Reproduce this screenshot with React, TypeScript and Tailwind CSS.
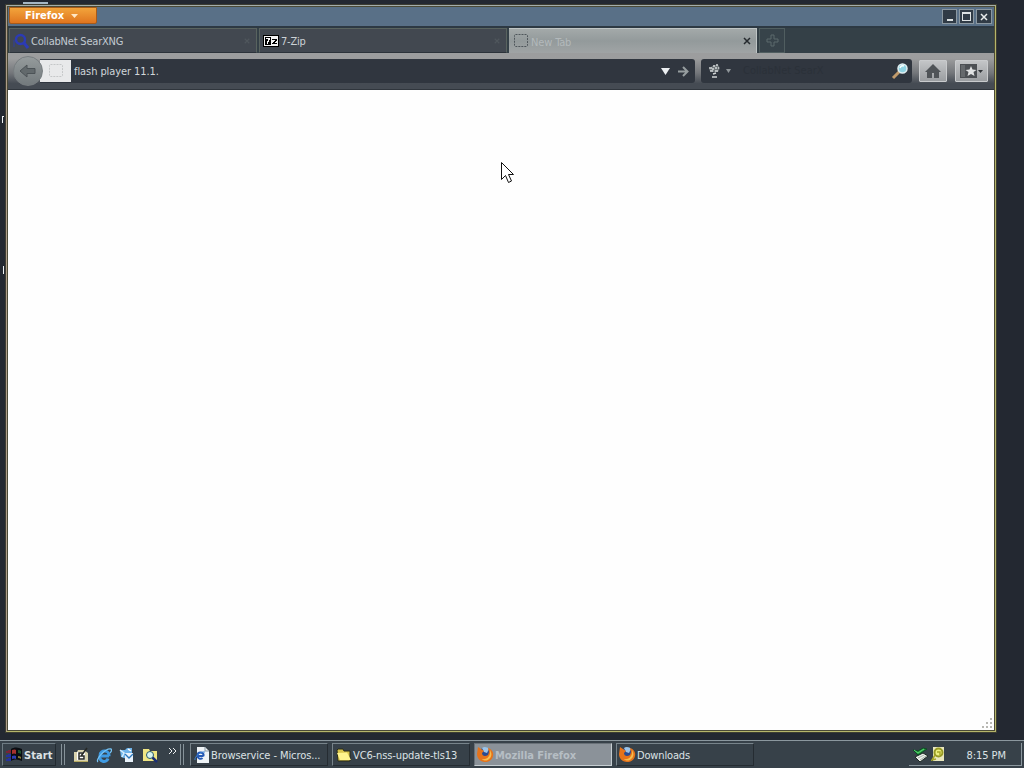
import type { ReactNode } from "react";

type TabProps = {
  title: string;
  icon: ReactNode;
  active?: boolean;
  titleClass?: string;
};

type TaskButtonProps = {
  label: string;
  icon: ReactNode;
  className: string;
  labelClass?: string;
};

function BlankPageIcon({ stroke = "#4f565b" }: { stroke?: string }) {
  return (
    <svg width="16" height="16" viewBox="0 0 16 16" fill="none">
      <rect x="1.5" y="1.5" width="13" height="12" rx="1" stroke={stroke} strokeDasharray="2 1" />
    </svg>
  );
}

function SearxIcon() {
  return (
    <svg width="16" height="16" viewBox="0 0 16 16" fill="none" stroke="#2c3bb4">
      <circle cx="7.500" cy="6.500" r="4.500" strokeWidth="2.500" />
      <path d="m11 10 4 5" strokeWidth="3" />
      <path d="M1 14V7" strokeWidth="1.500" opacity=".5" />
    </svg>
  );
}

function SevenZipIcon() {
  return (
    <svg width="16" height="12" viewBox="0 0 16 12" shapeRendering="crispEdges">
      <path fill="#000" d="M0 0h16v12H0z" />
      <path fill="#f4f4f4" d="M1 1h14v10H1z" />
      <path fill="#000" d="M2 2h6v8H2z" />
      <path d="M3 3h4v2H6v2H5v2H4V6h1V4H3z" fill="#fff" />
      <path d="M9 4h5v2h-1v1h-1v1h2v1H9V8h1V7h1V6h1V5H9z" fill="#000" />
    </svg>
  );
}

function FirefoxIcon() {
  return (
    <svg width="17" height="17" viewBox="0 0 17 17">
      <circle cx="8" cy="8" r="6.500" fill="#294b91" />
      <path d="M5 2c2-2 6-1 7 1l-2 4-3-1z" fill="#9cc4e8" />
      <path
        d="M1 1c1 1 2 1 3 2l3 2-2 2c0 3 3 4 6 2l1-3-1-4c4 1 6 5 5 8-1 4-4 6-8 6-5 0-8-4-8-8z"
        fill="#e5731b"
      />
      <path d="M13 4c2 3 2 7-1 9-2 2-5 2-7 0 5 1 9-3 8-9z" fill="#f6bd4d" />
    </svg>
  );
}

function ExplorerGlyph() {
  return (
    <svg width="16" height="16" viewBox="0 0 16 16" fill="none">
      <path d="M13 9H4a4 4 0 0 0 8 2.500M4 8a4.500 4.500 0 0 1 9 1" stroke="#3f9be3" strokeWidth="3" />
      <path d="M2 15C-1 13 9 1 15 2c1 1 0 3-1 4" stroke="#76c4f5" strokeWidth="1.300" />
    </svg>
  );
}

function WebDocumentIcon() {
  return (
    <svg width="16" height="16" viewBox="0 0 16 16" fill="none">
      <path d="M3 0h8l4 4v12H3z" fill="#eef3f6" />
      <path d="M11 0v4h4" stroke="#8797a4" />
      <path d="M9.500 9H3.500a3 3 0 0 0 5 2M3.500 8a3 3 0 0 1 6 1" stroke="#2459b5" strokeWidth="2" />
      <path d="M1 13C0 10 7 4 11 5" stroke="#3b82d4" />
    </svg>
  );
}

function FolderIcon() {
  return (
    <svg width="16" height="14" viewBox="0 0 16 14">
      <path d="M1 2 2 1h5l1 2h6v10H2z" fill="#d9c54c" stroke="#292b1b" />
      <path d="m1 5 10-.5L15 12H4z" fill="#fff48d" />
    </svg>
  );
}

function DesktopIcon() {
  return (
    <svg width="16" height="16" viewBox="0 0 16 16" fill="none">
      <path d="M1 5h3l1-2h6l4 3v9H1z" fill="#d9d3ae" />
      <path d="M4 5h8v8H4z" fill="#fff" />
      <path d="M11 6H6v6h5V9H8l6-8" stroke="#252724" strokeWidth="1.500" />
      <path d="M1 14.500h14" stroke="#b7ab62" />
    </svg>
  );
}

function MailIcon() {
  return (
    <svg width="16" height="16" viewBox="0 0 16 16" fill="none">
      <path d="M1 3h5l2-2h5v6l-5 5-6-2z" fill="#6fb4ea" />
      <path d="m1 3 4 3-2 4" stroke="#d6edfb" strokeWidth="1.500" />
      <path d="M6 6h8v9H6z" fill="#e9f2fa" />
      <path d="m6 7 4 4 4-4" stroke="#2c77bb" strokeWidth="1.300" />
      <path d="m9 2 3 2" stroke="#fff" strokeWidth="1.500" />
    </svg>
  );
}

function SearchFolderIcon() {
  return (
    <svg width="16" height="16" viewBox="0 0 16 16" fill="none">
      <path d="M1 2h6l1 2h7v10H1z" fill="#efe583" />
      <circle cx="8" cy="8" r="3.500" fill="#d8f3f0" stroke="#25596a" />
      <path d="m10.500 10.500 4.500 4.500" stroke="#1a2f75" strokeWidth="2.500" />
    </svg>
  );
}

function WindowsFlag() {
  return (
    <svg width="17" height="15" viewBox="0 0 17 15">
      <path d="M0 4h2v2H0zM2 3h3v3H2z" fill="#7a2436" />
      <path d="M0 8h2v2H0zM2 7h3v3H2zM0 12h2v2H0zM2 11h3v3H2z" fill="#26329d" />
      <path d="M5 2c3-2 7-2 11 0v12c-4-2-8-2-11 0z" fill="#090d12" />
      <path d="M6 3q3-1 4 0v4q-2-1-4 0z" fill="#a5322e" />
      <path d="M12 3q2 0 3 1v3q-1-1-3-1z" fill="#1d5330" />
      <path d="M6 9q3-1 4 0v3q-2-1-4 0z" fill="#2f3eb4" />
      <path d="M12 9q2 0 3 1v2q-1-1-3-1z" fill="#857a35" />
    </svg>
  );
}

function CloseGlyph({ color }: { color: string }) {
  return (
    <svg width="8" height="8" viewBox="0 0 8 8" stroke={color} strokeWidth="1.500">
      <path d="m1 1 6 6M7 1 1 7" />
    </svg>
  );
}

function Tab({ title, icon, active, titleClass = "text-[#ccd2d6]" }: TabProps) {
  return (
    <div
      className={
        active
          ? "flex h-[25px] w-[248px] items-center border-t border-r border-[#bfc5c5] bg-linear-to-b from-[#a3a9a9] via-[#939a9b] to-[#a0a4a5] pl-1"
          : "flex h-[25px] w-[248px] items-center border border-[#59635f] border-b-[#2c333a] bg-[#424850] pl-[3px]"
      }
    >
      <span className="flex w-[18px] items-center">{icon}</span>
      <span className={`flex-1 pt-[3px] ${titleClass}`}>{title}</span>
      <span className={active ? "mr-[5px] flex" : "mr-[5px] flex scale-75"}>
        <CloseGlyph color={active ? "#252a2e" : "#50575d"} />
      </span>
    </div>
  );
}

function TitleBar() {
  return (
    <div className="flex h-[21px] justify-between border-b-2 border-[#2d3943] bg-[#597087] pl-px">
      <div className="flex h-[17px] w-[88px] items-center rounded-b-[2px] border border-[#a75a19] bg-linear-to-b from-[#f2a43b] to-[#df751e] pl-[15px] text-white">
        <span className="pt-px text-[11px] font-bold">Firefox</span>
        <svg className="ml-[7px]" width="7" height="4" viewBox="0 0 7 4">
          <path d="M0 0h7L3.500 4z" fill="#ffe7c5" />
        </svg>
      </div>
      <div className="mt-[2px] mr-[2px] flex h-[15px] gap-[2px]">
        <span className="flex w-[15px] items-end justify-center border border-[#8b98a1] bg-[#303b46] pb-[2px]">
          <span className="h-[2px] w-[6px] bg-[#dce1e3]" />
        </span>
        <span className="flex w-[15px] items-center justify-center border border-[#8b98a1] bg-[#303b46]">
          <span className="h-[9px] w-[9px] border border-t-2 border-[#dce1e3]" />
        </span>
        <span className="flex w-[16px] items-center justify-center border border-[#8b98a1] bg-[#303b46]">
          <CloseGlyph color="#e8ebec" />
        </span>
      </div>
    </div>
  );
}

function TabStrip() {
  return (
    <div className="flex h-[25px] gap-[2px] bg-[#344047] pl-px">
      <Tab title="CollabNet SearXNG" icon={<SearxIcon />} titleClass="tracking-[-0.2px] text-[#c3cbd2]" />
      <Tab title="7-Zip" icon={<SevenZipIcon />} titleClass="tracking-[-0.2px] text-[#ccd2d6]" />
      <Tab title="New Tab" icon={<BlankPageIcon />} active titleClass="tracking-[-0.15px] text-[#b3b9bb]" />
      <div className="flex w-[26px] items-center justify-center border border-[#505e60] bg-[#37434a]">
        <svg width="13" height="13" viewBox="0 0 13 13" fill="none" stroke="#5d6b6d">
          <path d="M5 1h3v4h4v3H8v4H5V8H1V5h4z" />
        </svg>
      </div>
    </div>
  );
}

function NavBar() {
  return (
    <div className="flex h-[37px] border-b border-[#30363d] bg-linear-to-b from-[#9c9d9e] from-15% via-[#74777b] via-55% to-[#454b53] to-85% pl-[5px]">
      <span className="z-10 mt-[3px] flex h-[30px] w-[30px] items-center justify-center rounded-full border border-[#777d80] bg-linear-to-b from-[#959b9c] to-[#737a7d]">
        <svg width="18" height="14" viewBox="0 0 18 14">
          <path d="m8 1-7 6 7 6V9.500h8v-5H8z" fill="#62696c" stroke="#4c5357" />
        </svg>
      </span>
      <div className="mt-[6px] -ml-[3px] flex h-[24px] w-[655px] items-center rounded-r-[3px] bg-[#30363f]">
        <span className="flex h-[22px] w-[31px] items-center justify-center bg-[#e8e9ea]">
          <BlankPageIcon stroke="#c5c7c8" />
        </span>
        <span className="flex-1 pt-[2px] pl-[3px] tracking-[-0.08px] text-[#d1d7da]">flash player 11.1.</span>
        <svg width="9" height="7" viewBox="0 0 9 7">
          <path d="M0 0h9L4.500 7z" fill="#eceff2" />
        </svg>
        <svg className="mr-[6px] ml-[8px]" width="11" height="11" viewBox="0 0 11 11" fill="none">
          <path d="M0 5.500h9M5 1l4.500 4.500L5 10" stroke="#969d9f" strokeWidth="2" />
        </svg>
      </div>
      <div className="mt-[6px] ml-[6px] flex h-[24px] w-[211px] items-center rounded-[3px] bg-[#30363f] pr-[3px] pl-[7px]">
        <svg width="12" height="14" viewBox="0 0 12 14" fill="none">
          <path d="M3 3 6 1h4l2 3-2 4H5L1 6z" fill="#6d7478" />
          <path
            d="M1 4h3M5 2h2M8 1h2M4 5h2M7 4h2M10 4h1M2 7h3M7 7h3M8 9l-3 1M4 13h5"
            stroke="#d0d4d5"
            strokeWidth="1.400"
          />
        </svg>
        <svg className="ml-[6px]" width="5" height="4" viewBox="0 0 5 4">
          <path d="M0 0h5L2.500 4z" fill="#8e9599" />
        </svg>
        <span className="flex-1 pl-[12px] text-[#2b3139]">CollabNet SearX</span>
        <svg width="18" height="18" viewBox="0 0 18 18" fill="none">
          <path d="m8 10-6 6" stroke="#c09a6b" strokeWidth="3" />
          <circle cx="11.500" cy="6.500" r="4.500" fill="#8fd3e2" stroke="#e2f0f3" strokeWidth="1.500" />
          <path d="M9 6q1-3 4-2" stroke="#f8ffff" strokeWidth="1.500" />
        </svg>
      </div>
      <div className="mt-[7px] ml-[7px] flex h-[22px] w-[28px] items-center justify-center rounded-[1px] border border-[#c9cbcd] bg-linear-to-b from-[#c3c5c7] to-[#9b9ea1]">
        <svg width="16" height="14" viewBox="0 0 16 14">
          <path d="M8 0 0 8h2v6h5V9h2v5h5V8h2z" fill="#505458" />
        </svg>
      </div>
      <div className="mt-[7px] ml-[8px] flex h-[22px] w-[33px] items-center justify-center gap-px rounded-[1px] border border-[#c9cbcd] bg-linear-to-b from-[#c3c5c7] to-[#9b9ea1]">
        <svg width="17" height="14" viewBox="0 0 17 14">
          <path d="M0 0h17v14H0z" fill="#4c5054" />
          <path d="M2 1v12M4 1v12" stroke="#7e8285" />
          <path d="m11 2 1.500 3.500 4 .5-3 2 1 4-3.500-2-3.500 2 1-4-3-2 4-.5z" fill="#e1e3e4" />
        </svg>
        <svg width="5" height="3" viewBox="0 0 5 3">
          <path d="M0 0h5L2.500 3z" fill="#303438" />
        </svg>
      </div>
    </div>
  );
}

function PointerCursor() {
  return (
    <svg className="absolute top-[162px] left-[501px]" width="14" height="22" viewBox="0 0 14 22">
      <path d="M.5.5v17l4-4 3 7 3-1.500-3-6.500h5z" fill="#fff" stroke="#111" />
    </svg>
  );
}

function BrowserWindow() {
  return (
    <main className="mt-[4px] ml-[5px] h-[729px] w-[992px] border border-[#3d3d32]">
      <div className="h-full border border-t-[#a3adab] border-r-[#b5b56a] border-b-[#b5b56a] border-l-[#ae9c89]">
        <div className="flex h-full flex-col border border-[#4b4a36]">
          <TitleBar />
          <TabStrip />
          <NavBar />
          <div className="flex flex-1 items-end justify-end bg-[#fefefe] pr-px pb-px">
            <svg width="12" height="12" viewBox="0 0 12 12" fill="#b8b8b3">
              <path d="M9 1h2v2H9zM5 5h2v2H5zM9 5h2v2H9zM1 9h2v2H1zM5 9h2v2H5zM9 9h2v2H9z" />
            </svg>
          </div>
        </div>
      </div>
    </main>
  );
}

function TaskButton({ label, icon, className, labelClass }: TaskButtonProps) {
  return (
    <div className={`flex h-[23px] items-center ${className}`}>
      <span className="flex w-[17px] shrink-0 justify-center">{icon}</span>
      <span className={`pt-[2px] pl-px whitespace-nowrap ${labelClass ?? "text-[#dce2e5]"}`}>{label}</span>
    </div>
  );
}

function Separator() {
  return <span className="h-[21px] w-[4px] border-x border-[#87939a]" />;
}

function TrayIcons() {
  return (
    <div className="flex gap-[2px]">
      <svg width="17" height="17" viewBox="0 0 17 17" fill="none">
        <path d="m3 11 8-4 5 3-8 6z" fill="#edf1eb" stroke="#1d2823" />
        <path d="m6 12 6-3M8 14l6-4" stroke="#a8b0aa" />
        <path d="m1 4 5 5 9-6-4-1-5 3z" fill="#27983d" stroke="#0d4b25" />
        <path d="m2 4 4 3 6-4" stroke="#59d873" />
      </svg>
      <svg width="15" height="16" viewBox="0 0 15 16" fill="none">
        <path d="M2 1h11v14H2z" fill="#e9e7bd" />
        <circle cx="7.500" cy="6.500" r="4" stroke="#979a25" strokeWidth="2" fill="#eef081" />
        <path d="M4 9 1 14l4-1M6 6h3v3" stroke="#a7a629" strokeWidth="1.500" />
      </svg>
    </div>
  );
}

function Taskbar() {
  return (
    <footer className="mt-[7px] flex h-[28px] items-center border-t border-[#8b979e] bg-[#374149] pl-[2px] text-[#dce2e5]">
      <div className="flex h-[23px] w-[54px] items-center border border-[#6e7b83] border-r-[#232b31] border-b-[#232b31] pl-[3px]">
        <WindowsFlag />
        <span className="pt-[2px] pl-px text-[11px] font-bold tracking-[0.1px]">Start</span>
      </div>
      <span className="ml-[5px] flex">
        <Separator />
      </span>
      <div className="ml-[8px] flex items-center gap-[7px]">
        <DesktopIcon />
        <ExplorerGlyph />
        <MailIcon />
        <SearchFolderIcon />
      </div>
      <svg className="mb-[7px] ml-[10px]" width="9" height="6" viewBox="0 0 9 6" fill="none" stroke="#edf0f1">
        <path d="m1 0 3 3-3 3M5 0l3 3-3 3" />
      </svg>
      <span className="ml-[3px] flex">
        <Separator />
      </span>
      <TaskButton
        label="Browservice - Micros..."
        icon={<WebDocumentIcon />}
        className="ml-[6px] w-[138px] border border-[#78848b] border-r-[#252c32] border-b-[#252c32] pl-[2px]"
        labelClass="tracking-[-0.08px]"
      />
      <TaskButton
        label="VC6-nss-update-tls13"
        icon={<FolderIcon />}
        className="ml-[4px] w-[138px] border border-[#78848b] border-r-[#252c32] border-b-[#252c32] pl-[2px]"
        labelClass="tracking-[-0.12px]"
      />
      <TaskButton
        label="Mozilla Firefox"
        icon={<FirefoxIcon />}
        className="ml-[4px] w-[138px] border border-[#697178] border-r-[#c5cdd1] border-b-[#c5cdd1] bg-[#8b9299] pl-[2px]"
        labelClass="pt-[3px] font-bold tracking-[-0.05px] text-[#b6bec4]"
      />
      <TaskButton
        label="Downloads"
        icon={<FirefoxIcon />}
        className="ml-[4px] w-[138px] border border-[#78848b] border-r-[#252c32] border-b-[#252c32] pl-[2px]"
        labelClass="tracking-[-0.15px]"
      />
      <div className="mr-[2px] ml-auto flex h-[23px] w-[113px] items-center justify-between border-r border-b border-[#8b979e] pr-[15px] pl-[3px]">
        <TrayIcons />
        <span className="pt-[3px] tracking-[-0.05px] whitespace-nowrap">8:15 PM</span>
      </div>
    </footer>
  );
}

export default function App() {
  return (
    <div className="relative flex h-[768px] w-[1024px] flex-col overflow-hidden bg-[#232831] font-['DejaVu_Sans_Condensed','DejaVu_Sans',sans-serif] text-[11px] leading-[14px]">
      <BrowserWindow />
      <PointerCursor />
      <span className="absolute top-[2px] left-[23px] h-[2px] w-[25px] bg-[#a5b6c3]" />
      <span className="absolute top-[116px] left-[2px] h-[7px] w-[2px] border-t border-l border-[#edf1f2]" />
      <span className="absolute top-[266px] left-[3px] h-[8px] w-px bg-[#edf1f2]" />
      <Taskbar />
    </div>
  );
}
